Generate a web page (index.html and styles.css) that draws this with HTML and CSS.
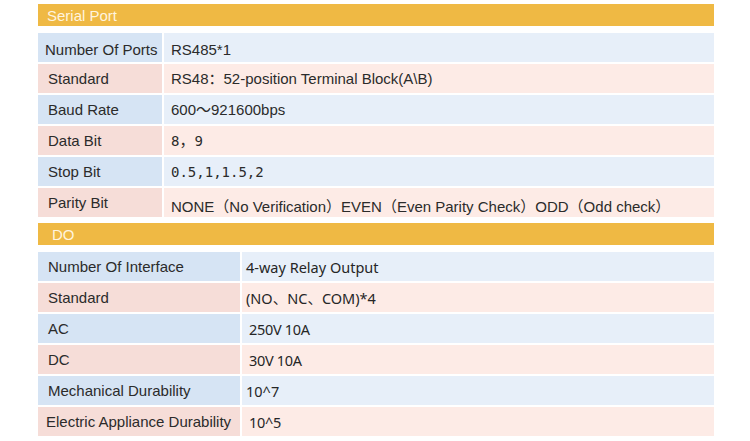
FILE: index.html
```html
<!DOCTYPE html>
<html>
<head>
<meta charset="utf-8">
<link rel="stylesheet" href="styles.css">
</head>
<body>
<div class="page">
  <section class="section">
    <div class="section-head">Serial Port</div>
    <div class="grid grid-serial">
      <div class="cell label blue lower tight">Number Of Ports</div>
      <div class="cell value blue lower">RS485*1</div>
      <div class="cell label pink">Standard</div>
      <div class="cell value pink">RS48：52-position Terminal Block(A\B)</div>
      <div class="cell label blue">Baud Rate</div>
      <div class="cell value blue">600～921600bps</div>
      <div class="cell label pink">Data Bit</div>
      <div class="cell value pink"><span class="mono">8</span>，<span class="mono">9</span></div>
      <div class="cell label blue">Stop Bit</div>
      <div class="cell value blue"><span class="mono">0.5,1,1.5,2</span></div>
      <div class="cell label pink">Parity Bit</div>
      <div class="cell value pink lowest">NONE（No Verification）EVEN（Even Parity Check）ODD（Odd check）</div>
    </div>
  </section>
  <section class="section section-do">
    <div class="section-head head-do">DO</div>
    <div class="grid grid-do">
      <div class="cell label blue">Number Of Interface</div>
      <div class="cell value dov blue">4-way Relay Output</div>
      <div class="cell label pink">Standard</div>
      <div class="cell value dov pink">(NO、NC、COM)*4</div>
      <div class="cell label blue">AC</div>
      <div class="cell value dov blue nudge">250V 10A</div>
      <div class="cell label pink">DC</div>
      <div class="cell value dov pink nudge">30V 10A</div>
      <div class="cell label blue">Mechanical Durability</div>
      <div class="cell value dov blue">10^7</div>
      <div class="cell label pink tight-do">Electric Appliance Durability</div>
      <div class="cell value dov pink nudge">10^5</div>
    </div>
  </section>
</div>
</body>
</html>
```

FILE: styles.css
```css
html, body {
  margin: 0;
  padding: 0;
  background: #ffffff;
}

body {
  font-family: "Liberation Sans", Arial, "Noto Sans CJK SC", sans-serif;
  color: #2b2b2b;
}

.page {
  width: 676px;
  padding: 4px 0 0 38px;
}

.section-do {
  margin-top: 6px;
}

.section-head {
  height: 22px;
  box-sizing: border-box;
  padding: 2px 0 0 9px;
  line-height: 20px;
  font-size: 15px;
  background: #efb944;
  color: #fff4df;
}

.head-do {
  padding-left: 14px;
}

.grid {
  display: grid;
  gap: 2px;
  margin-top: 7px;
}

.grid-serial {
  grid-template-columns: 124px 1fr;
}

.grid-do {
  grid-template-columns: 202px 1fr;
}

.cell {
  height: 29px;
  box-sizing: border-box;
  padding-top: 1px;
  line-height: 28px;
  font-size: 15px;
  white-space: nowrap;
  overflow: hidden;
}

.label {
  padding-left: 10px;
}

.label.tight {
  padding-left: 7px;
}

.label.tight-do {
  padding-left: 8px;
}

.value {
  padding-left: 7px;
}

.lower {
  padding-top: 3px;
}

.lowest {
  padding-top: 5px;
}

.label.blue { background: #d6e4f4; }
.value.blue { background: #e7eff9; }
.label.pink { background: #f6ddd8; }
.value.pink { background: #fdebe6; }

.mono {
  font-family: "DejaVu Sans Mono", monospace;
  font-size: 14px;
}

.dov {
  font-family: "Noto Sans", "Noto Sans CJK SC", sans-serif;
  font-size: 14.5px;
  padding-left: 4px;
  color: #262626;
}

.dov.nudge {
  padding-left: 7px;
  letter-spacing: -0.3px;
}
```
